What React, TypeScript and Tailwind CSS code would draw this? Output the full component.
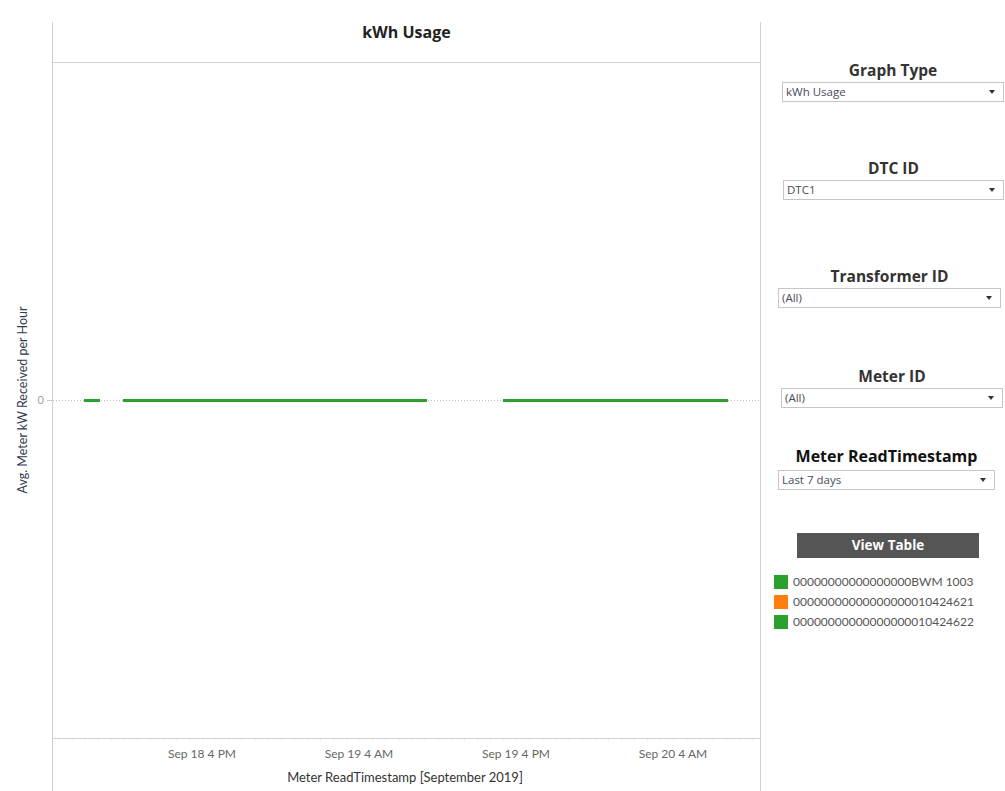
import React from "react";

const F = { fontFamily: '"Open Sans", "Liberation Sans", sans-serif' };
const L = { fontFamily: 'Lato, "Liberation Sans", sans-serif' };

function Dropdown({ value, ml, w, mt, title, big }: { value: string; ml: number; w: number; mt: number; title: string; big?: boolean }) {
  return (
    <div style={{ marginLeft: ml, width: w, marginTop: mt }} className="flex flex-col">
      <div
        style={F}
        className={
          big
            ? "text-center text-[16px] font-bold leading-[20px] text-[#111] mb-[4px]"
            : "text-center text-[15.5px] font-bold leading-[20px] text-[#333] mb-[2px]"
        }
      >
        {title}
      </div>
      <div className="flex h-[20px] items-center justify-between border border-[#c6c6c6] bg-white pl-[3px] pr-[8px]">
        <span style={F} className="text-[11.5px] leading-[18px] text-[#4a4a5a]">{value}</span>
        <span className="h-0 w-0 border-x-[3.5px] border-t-[4px] border-x-transparent border-t-[#333]" />
      </div>
    </div>
  );
}

function Legend({ color, label }: { color: string; label: string }) {
  return (
    <div className="flex h-[20px] items-center gap-[5px]">
      <span className="h-[14px] w-[14px]" style={{ backgroundColor: color }} />
      <span style={L} className="text-[12px] text-[#555]">{label}</span>
    </div>
  );
}

export default function App() {
  const ticks: number[] = [];
  for (let x = 6; x < 707; x += 13.08) ticks.push(x);
  return (
    <div className="flex h-[791px] w-[1005px] overflow-hidden bg-white">
      <div className="flex w-[761px] pt-[22px]">
        <div className="flex w-[52px] flex-col">
          <div className="h-[41px]" />
          <svg width="52" height="676">
            <text
              x="0"
              y="0"
              transform="translate(27 337) rotate(-90)"
              textAnchor="middle"
              fontSize="12.5"
              fill="#2f3b4f"
              style={L}
            >
              Avg. Meter kW Received per Hour
            </text>
            <text x="44" y="341" textAnchor="end" fontSize="11" fill="#a0a0a0" style={L}>
              0
            </text>
            <line x1="47" y1="337.5" x2="52" y2="337.5" stroke="#d0d0d0" strokeWidth="1" />
          </svg>
        </div>
        <div className="flex w-[709px] flex-col border-x border-[#d0d0d0]">
          <div className="flex h-[41px] items-start justify-center border-b border-[#d0d0d0] pt-[0px]">
            <span style={F} className="text-[16px] font-bold leading-[20px] text-[#222]">kWh Usage</span>
          </div>
          <svg width="707" height="676" className="block">
            <line x1="0" y1="337.5" x2="707" y2="337.5" stroke="#bdbdbd" strokeWidth="1" strokeDasharray="1 2" />
            <line x1="31" y1="337.5" x2="47" y2="337.5" stroke="#2ca02c" strokeWidth="3" />
            <line x1="70" y1="337.5" x2="374" y2="337.5" stroke="#2ca02c" strokeWidth="3" />
            <line x1="450" y1="337.5" x2="675" y2="337.5" stroke="#2ca02c" strokeWidth="3" />
          </svg>
          <div className="flex-1 border-t border-[#d0d0d0]">
            <svg width="707" height="52" className="block">
              {ticks.map((x, i) => (
                <line key={i} x1={x} y1="0" x2={x} y2="3" stroke="#f2f2f2" strokeWidth="1" />
              ))}
              {[
                [149, "Sep 18 4 PM"],
                [306, "Sep 19 4 AM"],
                [463, "Sep 19 4 PM"],
                [620, "Sep 20 4 AM"],
              ].map(([x, t]) => (
                <text key={t as string} x={x as number} y="19" textAnchor="middle" fontSize="12" fill="#666" style={L}>
                  {t}
                </text>
              ))}
              <text x="352" y="43" textAnchor="middle" fontSize="13" fill="#333" style={L}>
                Meter ReadTimestamp [September 2019]
              </text>
            </svg>
          </div>
        </div>
      </div>
      <div className="flex w-[244px] flex-col">
        <Dropdown title="Graph Type" value="kWh Usage" ml={21} w={222} mt={60} />
        <Dropdown title="DTC ID" value="DTC1" ml={22} w={221} mt={56} />
        <Dropdown title="Transformer ID" value="(All)" ml={17} w={223} mt={66} />
        <Dropdown title="Meter ID" value="(All)" ml={20} w={222} mt={58} />
        <Dropdown title="Meter ReadTimestamp" value="Last 7 days" ml={17} w={217} mt={38} big />
        <div className="ml-[36px] mt-[43px] flex h-[25px] w-[182px] items-center justify-center bg-[#555]">
          <span style={F} className="text-[13.5px] font-bold text-white">View Table</span>
        </div>
        <div className="ml-[13px] mt-[14px] flex flex-col">
          <Legend color="#2ca02c" label="00000000000000000BWM 1003" />
          <Legend color="#ff7f0e" label="00000000000000000010424621" />
          <Legend color="#2ca02c" label="00000000000000000010424622" />
        </div>
      </div>
    </div>
  );
}
